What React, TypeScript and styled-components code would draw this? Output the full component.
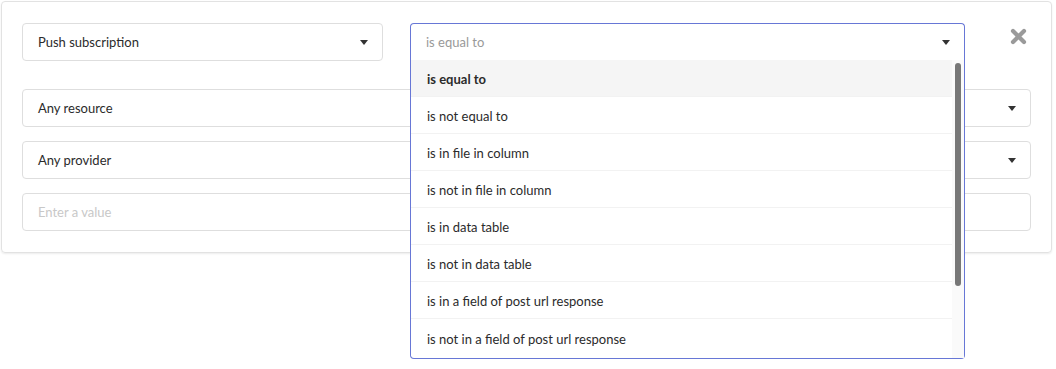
import React from "react";
import styled, { createGlobalStyle } from "styled-components";

const Global = createGlobalStyle`
  html, body { margin: 0; padding: 0; background: #fff; }
  body { font-family: Lato, "Liberation Sans", sans-serif; font-size: 13px; color: #2b2b2b; }
  #root { min-height: 369px; }
  * { box-sizing: border-box; }
`;

const Page = styled.div`
  min-height: 369px;
  padding: 1px 0 0 1px;
`;

const Card = styled.div`
  width: 1051px;
  border: 1px solid #e2e2e2;
  border-radius: 4px;
  box-shadow: 0 1px 2px rgba(0, 0, 0, 0.08);
  padding: 21px 20px 21px 20px;
  display: flex;
  flex-direction: column;
`;

const TopRow = styled.div`
  display: grid;
  grid-template-columns: 361px 555px 1fr;
  column-gap: 27px;
  align-items: start;
  margin-bottom: 28px;
  position: relative;
  z-index: 2;
`;

const Stack = styled.div`
  display: flex;
  flex-direction: column;
  gap: 14px;
`;

const Select = styled.div<{ $placeholder?: boolean }>`
  position: relative;
  height: 38px;
  border: 1px solid #dedede;
  border-radius: 4px;
  display: flex;
  align-items: center;
  padding: 0 15px;
  color: ${(p) => (p.$placeholder ? "#c8c8c8" : "#2b2b2b")};
  background: #fff;
`;

const Value = styled.span`
  flex: 1;
  white-space: nowrap;
`;

const Caret = styled.span`
  width: 0;
  height: 0;
  border-left: 4px solid transparent;
  border-right: 4px solid transparent;
  border-top: 5px solid #333;
  margin-right: -1px;
`;

const OpenSelect = styled.div`
  position: relative;
  height: 37px;
  border: 1px solid #6777d6;
  border-bottom: none;
  border-radius: 4px 4px 0 0;
  display: flex;
  align-items: center;
  padding: 0 15px;
  color: #999;
  background: #fff;
`;

const Menu = styled.div`
  position: absolute;
  top: 36px;
  left: -1px;
  right: -1px;
  border: 1px solid #6777d6;
  border-top: none;
  border-radius: 0 0 4px 4px;
  background: #fff;
  display: flex;
`;

const List = styled.ul`
  list-style: none;
  margin: 0;
  padding: 0 0 2px 0;
  flex: 1;
`;

const Item = styled.li<{ $active?: boolean }>`
  height: 37px;
  display: flex;
  align-items: center;
  padding: 2px 0 0 16px;
  border-bottom: 1px solid #f2f2f2;
  color: #2b2b2b;
  font-weight: ${(p) => (p.$active ? 700 : 400)};
  background: ${(p) => (p.$active ? "#f5f5f5" : "#fff")};
  &:last-child { border-bottom: none; }
`;

const Track = styled.div`
  width: 12px;
  background: #fafafa;
  padding: 3px 3px 0 3px;
`;

const Thumb = styled.div`
  width: 6px;
  height: 223px;
  background: #777;
  border-radius: 3px;
`;

const Close = styled.button`
  justify-self: end;
  margin: 5px 4px 0 0;
  padding: 0;
  border: none;
  background: none;
  width: 17px;
  height: 17px;
  display: flex;
`;

const options = [
  "is equal to",
  "is not equal to",
  "is in file in column",
  "is not in file in column",
  "is in data table",
  "is not in data table",
  "is in a field of post url response",
  "is not in a field of post url response",
];

export default function App() {
  return (
    <Page>
      <Global />
      <Card>
        <TopRow>
          <Select>
            <Value>Push subscription</Value>
            <Caret />
          </Select>
          <OpenSelect>
            <Value>is equal to</Value>
            <Caret />
            <Menu>
              <List>
                {options.map((o, i) => (
                  <Item key={o} $active={i === 0}>
                    {o}
                  </Item>
                ))}
              </List>
              <Track>
                <Thumb />
              </Track>
            </Menu>
          </OpenSelect>
          <Close aria-label="Remove">
            <svg width="17" height="17" viewBox="0 0 17 17">
              <path d="M3 3 L14 14 M14 3 L3 14" stroke="#9a9a9a" strokeWidth="4.2" strokeLinecap="round" />
            </svg>
          </Close>
        </TopRow>
        <Stack>
          <Select>
            <Value>Any resource</Value>
            <Caret />
          </Select>
          <Select>
            <Value>Any provider</Value>
            <Caret />
          </Select>
          <Select $placeholder>
            <Value>Enter a value</Value>
          </Select>
        </Stack>
      </Card>
    </Page>
  );
}
